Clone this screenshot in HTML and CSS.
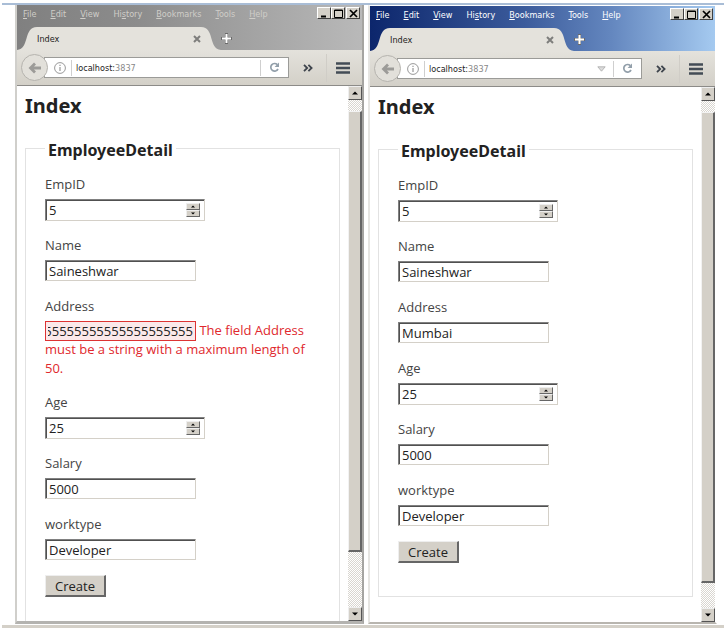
FILE: index.html
```html
<!DOCTYPE html>
<html lang="en">
<head>
    <meta charset="UTF-8">
    <meta name="viewport" content="width=device-width, initial-scale=1.0">
    <title>Index</title>
    <link rel="stylesheet" href="styles.css">
</head>
<body>
    <!-- shared icons -->
    <svg class="sprite" aria-hidden="true">
        <symbol id="tab-left" viewBox="0 0 20 23"><path d="M0 23 C13 22 6 0 20 0 V23 Z" fill="#e4e2dc"/></symbol>
        <symbol id="tab-right" viewBox="0 0 20 23"><path d="M20 23 C7 22 14 0 0 0 V23 Z" fill="#e4e2dc"/></symbol>
        <symbol id="cross" viewBox="0 0 8 8"><path d="M1 1 L7 7 M7 1 L1 7" fill="none" stroke="#7e7e7c" stroke-width="2"/></symbol>
        <symbol id="plus" viewBox="0 0 11 11"><path d="M5.5 0 V11 M0 5.5 H11" stroke="#6a6a6a" stroke-width="3"/><path d="M5.5 1 V10 M1 5.5 H10" stroke="#fff" stroke-width="2"/></symbol>
        <symbol id="min" viewBox="0 0 9 9"><path d="M1 7.5 H6" stroke="#000" stroke-width="2"/></symbol>
        <symbol id="max" viewBox="0 0 9 9"><path d="M0.5 1 H8.5 V8.5 H0.5 Z M0.5 1.5 H8.5" fill="none" stroke="#000"/></symbol>
        <symbol id="close" viewBox="0 0 9 9"><path d="M1 1 L8 8 M8 1 L1 8" stroke="#000" stroke-width="1.7"/></symbol>
        <symbol id="back" viewBox="0 0 14 12"><path d="M7 1.5 L2.5 6 L7 10.5 M3 6 H13" fill="none" stroke="#9c9b98" stroke-width="2.8"/></symbol>
        <symbol id="info" viewBox="0 0 12 12"><circle cx="6" cy="6" r="5.4" fill="none" stroke="#8d8d8d" stroke-width="0.9"/><path d="M6 5 V9 M6 2.8 V4" stroke="#8d8d8d" stroke-width="1.1"/></symbol>
        <symbol id="drop" viewBox="0 0 9 6"><path d="M0.8 0.8 H8.2 L4.5 5.2 Z" fill="#dcdcdc" stroke="#a8a8a8" stroke-width="0.8"/></symbol>
        <symbol id="reload" viewBox="0 0 11 11"><path d="M8.3 2.6 A3.8 3.8 0 1 0 9 7" fill="none" stroke="#929faa" stroke-width="1.7"/><path d="M10 0.6 V5 H5.6 Z" fill="#929faa"/></symbol>
        <symbol id="more" viewBox="0 0 10 8"><path d="M1 0.8 L4.2 4 L1 7.2 M5.4 0.8 L8.6 4 L5.4 7.2" fill="none" stroke="#3e444c" stroke-width="1.8"/></symbol>
        <symbol id="bars" viewBox="0 0 14 12"><path d="M0 1.5 H14 M0 6 H14 M0 10.5 H14" stroke="#434c56" stroke-width="2.4"/></symbol>
        <symbol id="up" viewBox="0 0 6 4"><path d="M0 3.5 L3 0.5 L6 3.5 Z"/></symbol>
        <symbol id="down" viewBox="0 0 6 4"><path d="M0 0.5 L3 3.5 L6 0.5 Z"/></symbol>
    </svg>

    <main class="desktop">
        <section class="window inactive">
            <header class="titlebar">
                <div class="menu-row">
                    <nav class="menu">
                        <button><u>F</u>ile</button>
                        <button><u>E</u>dit</button>
                        <button><u>V</u>iew</button>
                        <button>Hi<u>s</u>tory</button>
                        <button><u>B</u>ookmarks</button>
                        <button><u>T</u>ools</button>
                        <button><u>H</u>elp</button>
                    </nav>
                    <div class="window-buttons">
                        <button aria-label="Minimize"><svg><use href="#min"/></svg></button>
                        <button aria-label="Maximize"><svg><use href="#max"/></svg></button>
                        <button aria-label="Close"><svg><use href="#close"/></svg></button>
                    </div>
                </div>
                <div class="tabs">
                    <svg class="tab-edge"><use href="#tab-left"/></svg>
                    <div class="tab">
                        <span>Index</span>
                        <button aria-label="Close tab"><svg class="icon-cross"><use href="#cross"/></svg></button>
                    </div>
                    <svg class="tab-edge"><use href="#tab-right"/></svg>
                    <button class="new-tab" aria-label="New tab"><svg><use href="#plus"/></svg></button>
                </div>
            </header>
            <div class="toolbar">
                <button class="back" aria-label="Back"><svg><use href="#back"/></svg></button>
                <div class="urlbar">
                    <svg class="icon-info"><use href="#info"/></svg>
                    <span class="url">localhost:<span class="port">3837</span></span>
                    <button class="reload" aria-label="Reload"><svg><use href="#reload"/></svg></button>
                </div>
                <button class="more" aria-label="More tools"><svg><use href="#more"/></svg></button>
                <button class="bars" aria-label="Open menu"><svg><use href="#bars"/></svg></button>
            </div>
            <div class="viewport">
                <div class="page">
                    <h1>Index</h1>
                    <form>
                        <fieldset>
                            <legend>EmployeeDetail</legend>
                            <label for="a-empid">EmpID</label>
                            <div class="field">
                                <div class="number">
                                    <input id="a-empid" type="number" value="5">
                                    <div class="spin">
                                        <button type="button" aria-label="Increase"><svg><use href="#up"/></svg></button>
                                        <button type="button" aria-label="Decrease"><svg><use href="#down"/></svg></button>
                                    </div>
                                </div>
                            </div>
                            <label for="a-name">Name</label>
                            <div class="field"><input class="text" id="a-name" type="text" value="Saineshwar"></div>
                            <label for="a-address">Address</label>
                            <div class="field">
                                <input class="text error" id="a-address" type="text" value="555555555555555555555555555555555555555555555555555555555555">
                                <span class="message">The field Address must be a string with a maximum length of 50.</span>
                            </div>
                            <label for="a-age">Age</label>
                            <div class="field">
                                <div class="number">
                                    <input id="a-age" type="number" value="25">
                                    <div class="spin">
                                        <button type="button" aria-label="Increase"><svg><use href="#up"/></svg></button>
                                        <button type="button" aria-label="Decrease"><svg><use href="#down"/></svg></button>
                                    </div>
                                </div>
                            </div>
                            <label for="a-salary">Salary</label>
                            <div class="field"><input class="text" id="a-salary" type="text" value="5000"></div>
                            <label for="a-worktype">worktype</label>
                            <div class="field"><input class="text" id="a-worktype" type="text" value="Developer"></div>
                            <button class="create" type="button">Create</button>
                        </fieldset>
                    </form>
                </div>
                <div class="scrollbar">
                    <button aria-label="Scroll up"><svg><use href="#up"/></svg></button>
                    <div class="track">
                        <div class="thumb"></div>
                    </div>
                    <button aria-label="Scroll down"><svg><use href="#down"/></svg></button>
                </div>
            </div>
        </section>

        <section class="window active">
            <header class="titlebar">
                <div class="menu-row">
                    <nav class="menu">
                        <button><u>F</u>ile</button>
                        <button><u>E</u>dit</button>
                        <button><u>V</u>iew</button>
                        <button>Hi<u>s</u>tory</button>
                        <button><u>B</u>ookmarks</button>
                        <button><u>T</u>ools</button>
                        <button><u>H</u>elp</button>
                    </nav>
                    <div class="window-buttons">
                        <button aria-label="Minimize"><svg><use href="#min"/></svg></button>
                        <button aria-label="Maximize"><svg><use href="#max"/></svg></button>
                        <button aria-label="Close"><svg><use href="#close"/></svg></button>
                    </div>
                </div>
                <div class="tabs">
                    <svg class="tab-edge"><use href="#tab-left"/></svg>
                    <div class="tab">
                        <span>Index</span>
                        <button aria-label="Close tab"><svg class="icon-cross"><use href="#cross"/></svg></button>
                    </div>
                    <svg class="tab-edge"><use href="#tab-right"/></svg>
                    <button class="new-tab" aria-label="New tab"><svg><use href="#plus"/></svg></button>
                </div>
            </header>
            <div class="toolbar">
                <button class="back" aria-label="Back"><svg><use href="#back"/></svg></button>
                <div class="urlbar">
                    <svg class="icon-info"><use href="#info"/></svg>
                    <span class="url">localhost:<span class="port">3837</span></span>
                    <button class="history" aria-label="Show history"><svg><use href="#drop"/></svg></button>
                    <button class="reload" aria-label="Reload"><svg><use href="#reload"/></svg></button>
                </div>
                <button class="more" aria-label="More tools"><svg><use href="#more"/></svg></button>
                <button class="bars" aria-label="Open menu"><svg><use href="#bars"/></svg></button>
            </div>
            <div class="viewport">
                <div class="page">
                    <h1>Index</h1>
                    <form>
                        <fieldset>
                            <legend>EmployeeDetail</legend>
                            <label for="b-empid">EmpID</label>
                            <div class="field">
                                <div class="number">
                                    <input id="b-empid" type="number" value="5">
                                    <div class="spin">
                                        <button type="button" aria-label="Increase"><svg><use href="#up"/></svg></button>
                                        <button type="button" aria-label="Decrease"><svg><use href="#down"/></svg></button>
                                    </div>
                                </div>
                            </div>
                            <label for="b-name">Name</label>
                            <div class="field"><input class="text" id="b-name" type="text" value="Saineshwar"></div>
                            <label for="b-address">Address</label>
                            <div class="field"><input class="text" id="b-address" type="text" value="Mumbai"></div>
                            <label for="b-age">Age</label>
                            <div class="field">
                                <div class="number">
                                    <input id="b-age" type="number" value="25">
                                    <div class="spin">
                                        <button type="button" aria-label="Increase"><svg><use href="#up"/></svg></button>
                                        <button type="button" aria-label="Decrease"><svg><use href="#down"/></svg></button>
                                    </div>
                                </div>
                            </div>
                            <label for="b-salary">Salary</label>
                            <div class="field"><input class="text" id="b-salary" type="text" value="5000"></div>
                            <label for="b-worktype">worktype</label>
                            <div class="field"><input class="text" id="b-worktype" type="text" value="Developer"></div>
                            <button class="create" type="button">Create</button>
                        </fieldset>
                    </form>
                </div>
                <div class="scrollbar">
                    <button aria-label="Scroll up"><svg><use href="#up"/></svg></button>
                    <div class="track">
                        <div class="thumb"></div>
                    </div>
                    <button aria-label="Scroll down"><svg><use href="#down"/></svg></button>
                </div>
            </div>
        </section>
    </main>

    <script>
        // keep the end of the long address in view
        const address = document.getElementById('a-address');
        address.scrollLeft = address.scrollWidth;
    </script>
</body>
</html>
```
FILE: styles.css
```css
* {
    box-sizing: border-box;
}

body {
    margin: 0;
    padding: 3px 2px 2px;
    height: 100vh;
    background-color: #fff;
    font-family: 'Open Sans', 'Noto Sans', sans-serif;
    font-size: 13px;
    color: #333;
}

button {
    margin: 0;
    padding: 0;
    border: none;
    background: none;
    font: inherit;
    color: inherit;
    display: flex;
    align-items: center;
    justify-content: center;
}

svg {
    display: block;
    flex: none;
}

.sprite {
    position: absolute;
    width: 0;
    height: 0;
}

.desktop {
    height: 100%;
    display: flex;
    gap: 4px;
    padding: 0 7px 1px 13px;
    border-top: 2px solid #a9bdd6;
    border-bottom: 3px solid #d4d0c8;
}

.window {
    flex: 1;
    min-width: 0;
    display: flex;
    flex-direction: column;
    border: solid #d0cfcb;
    border-width: 0 2px 3px;
}

.inactive {
    border-right-color: #a5a4a1;
    border-bottom-color: #b4b3b0;
}

.active {
    border-color: #fff #fff #b8b5af #e6e5e2;
    border-width: 1px 2px 2px;
}

/* title bar */
.titlebar {
    flex: none;
    color: #cfcdc8;
    background: linear-gradient(to right, #808080, #8c8c8c 35%, #b9b9b9);
    font-family: 'DejaVu Sans Condensed', 'DejaVu Sans', sans-serif;
    font-size: 9px;
}

.active .titlebar {
    color: #fff;
    background: linear-gradient(to right, #0c266c, #3c5c9c 45%, #6487bf 70%, #a5caf0);
}

.menu-row {
    height: 22px;
    padding: 2px 2px 0 6px;
    display: flex;
    justify-content: space-between;
    align-items: flex-start;
}

.menu {
    display: flex;
    gap: 14px;
    line-height: 14px;
}

.menu button {
    display: block;
}

.window-buttons {
    display: flex;
}

.window-buttons button {
    width: 14px;
    height: 12px;
    background-color: #d4d0c8;
    border: 1px solid;
    border-color: #fff #404040 #404040 #fff;
}

.window-buttons button:last-child {
    margin-left: 1px;
}

.window-buttons svg {
    width: 9px;
    height: 9px;
}

.tabs {
    display: flex;
    height: 23px;
}

.tab-edge {
    width: 20px;
    height: 23px;
}

.tab {
    width: 164px;
    display: flex;
    justify-content: space-between;
    align-items: center;
    background-color: #e4e2dc;
    color: #222;
}

.icon-cross {
    width: 8px;
    height: 8px;
}

.new-tab svg {
    width: 11px;
    height: 11px;
}

/* address bar */
.toolbar {
    flex: none;
    height: 36px;
    display: flex;
    align-items: center;
    padding-left: 4px;
    background: linear-gradient(#e4e2dc, #d3d0c8);
    border-bottom: 1px solid #8c8b88;
}

.back {
    position: relative;
    width: 27px;
    height: 27px;
    border: 1px solid #b5b3ae;
    border-radius: 50%;
    background-color: #e2e0da;
}

.back svg {
    width: 14px;
    height: 12px;
}

.urlbar {
    flex: 1;
    height: 21px;
    margin-left: -4px;
    padding-left: 9px;
    display: flex;
    align-items: center;
    border: 1px solid #9b9b98;
    background-color: #fff;
}

.icon-info {
    width: 12px;
    height: 12px;
    margin-right: 5px;
}

.url {
    flex: 1;
    padding-left: 4px;
    border-left: 1px solid #cfcfcf;
    font-family: 'DejaVu Sans Condensed', 'DejaVu Sans', sans-serif;
    font-size: 9px;
    line-height: 16px;
    color: #222;
}

.port {
    color: #888;
}

.history {
    width: 24px;
}

.history svg {
    width: 9px;
    height: 6px;
}

.reload {
    width: 28px;
    height: 16px;
    border-left: 1px solid #cfcfcf;
}

.reload svg {
    width: 11px;
    height: 11px;
}

.more {
    width: 37px;
}

.more svg {
    width: 10px;
    height: 8px;
}

.bars {
    width: 36px;
    height: 28px;
    padding-right: 3px;
    border-left: 1px solid #d0cdc7;
}

.bars svg {
    width: 14px;
    height: 12px;
}

/* page inside the window */
.viewport {
    flex: 1;
    min-height: 0;
    display: flex;
}

.page {
    flex: 1;
    min-width: 0;
    overflow: hidden;
    padding: 6px 8px 0;
}

h1 {
    margin: 0 0 16px;
    font-family: 'Noto Sans', sans-serif;
    font-size: 20px;
    line-height: 28px;
    color: #222;
}

fieldset {
    margin: 0;
    padding: 15px 32px 33px 19px;
    border: 1px solid #e2e2e2;
}

legend {
    padding: 4px 3px 0;
    font-family: 'Noto Sans', sans-serif;
    font-size: 16px;
    font-weight: bold;
    line-height: 20px;
    color: #222;
}

label {
    display: block;
    line-height: 19px;
    color: #444;
}

.field {
    min-height: 22px;
    margin: 5px 0 15px;
    line-height: 19px;
}

input {
    font: inherit;
    color: #222;
    outline: none;
}

.text {
    width: 151px;
    height: 21px;
    padding: 0 3px;
    border: 1px solid;
    border-color: #808080 #d4d0c8 #d4d0c8 #808080;
    box-shadow: inset 1px 1px #505050;
    vertical-align: top;
}

.error {
    height: 20px;
    margin-bottom: -1px;
    padding: 0 2px;
    border-color: #d33;
    box-shadow: none;
    background-color: #fbe9ea;
}

.message {
    color: #e0282d;
}

.number {
    width: 160px;
    height: 22px;
    display: flex;
    align-items: center;
    padding-right: 4px;
    border: 1px solid;
    border-color: #808080 #d4d0c8 #d4d0c8 #808080;
    box-shadow: inset 1px 1px #505050;
}

.number input {
    flex: 1;
    min-width: 0;
    height: 20px;
    padding: 0 3px;
    border: none;
    background: none;
    appearance: textfield;
}

.number input::-webkit-inner-spin-button {
    appearance: none;
    margin: 0;
}

.spin {
    width: 14px;
}

.spin button {
    width: 14px;
    height: 7px;
    background-color: #d4d0c8;
    border: 1px solid;
    border-color: #eee #666 #666 #eee;
}

.spin svg {
    width: 4px;
    height: 3px;
}

.create {
    width: 61px;
    height: 22px;
    margin-top: -1px;
    background-color: #d4d0c8;
    border: 1px solid;
    border-width: 1px 2px 2px 1px;
    border-color: #eee #666 #666 #eee;
    color: #222;
}

/* scrollbar */
.scrollbar {
    width: 14px;
    display: flex;
    flex-direction: column;
}

.scrollbar button {
    height: 14px;
    background-color: #d4d0c8;
    border: 1px solid;
    border-color: #eee #555 #555 #eee;
}

.scrollbar svg {
    width: 6px;
    height: 4px;
}

.track {
    flex: 1;
    padding-top: 11px;
    background: repeating-conic-gradient(#d9d6d0 0 25%, #fff 0 50%) 0 0 / 2px 2px;
}

.thumb {
    height: 89%;
    background-color: #d4d0c8;
    border: 1px solid;
    border-width: 1px 2px 2px 1px;
    border-color: #f2f2f2 #666 #666 #f2f2f2;
}

.active .thumb {
    height: 95%;
}
```
